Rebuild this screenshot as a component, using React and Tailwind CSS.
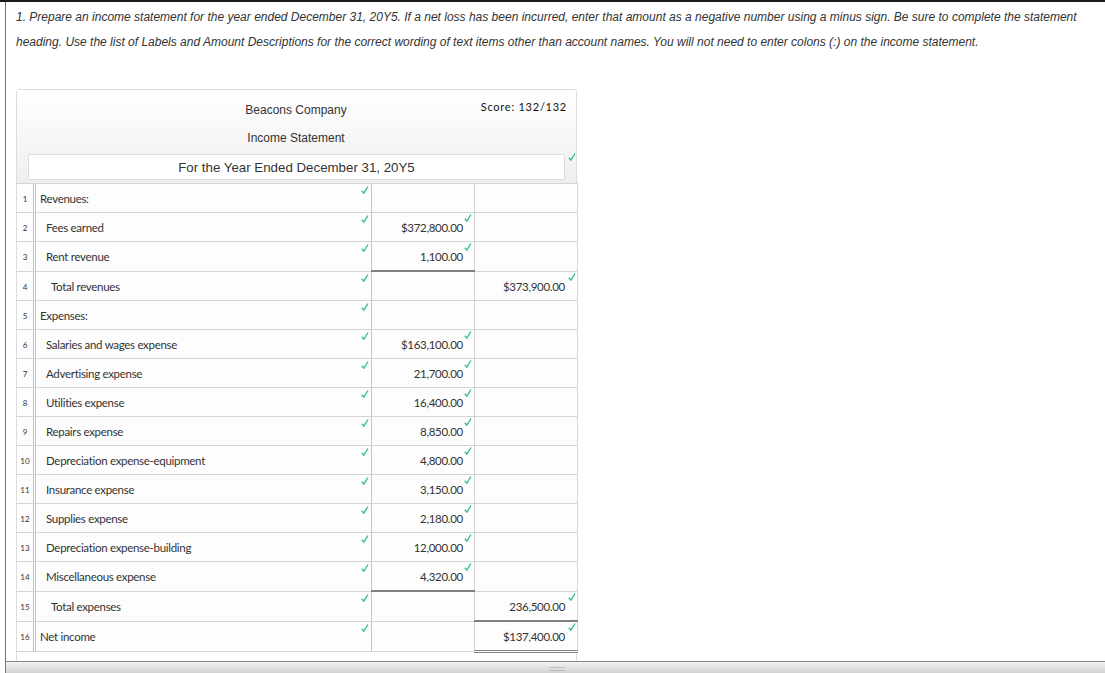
const rows = [
  { n: 1, label: "Revenues:", indent: 0, h: "h-[29px]" },
  { n: 2, label: "Fees earned", indent: 1, amount: "$372,800.00", h: "h-[29px]" },
  { n: 3, label: "Rent revenue", indent: 1, amount: "1,100.00", amountLine: true, h: "h-[30px]" },
  { n: 4, label: "Total revenues", indent: 2, total: "$373,900.00", h: "h-[29px]" },
  { n: 5, label: "Expenses:", indent: 0, h: "h-[29px]" },
  { n: 6, label: "Salaries and wages expense", indent: 1, amount: "$163,100.00", h: "h-[29px]" },
  { n: 7, label: "Advertising expense", indent: 1, amount: "21,700.00", h: "h-[29px]" },
  { n: 8, label: "Utilities expense", indent: 1, amount: "16,400.00", h: "h-[29px]" },
  { n: 9, label: "Repairs expense", indent: 1, amount: "8,850.00", h: "h-[29px]" },
  { n: 10, label: "Depreciation expense-equipment", indent: 1, amount: "4,800.00", h: "h-[29px]" },
  { n: 11, label: "Insurance expense", indent: 1, amount: "3,150.00", h: "h-[29px]" },
  { n: 12, label: "Supplies expense", indent: 1, amount: "2,180.00", h: "h-[29px]" },
  { n: 13, label: "Depreciation expense-building", indent: 1, amount: "12,000.00", h: "h-[29px]" },
  { n: 14, label: "Miscellaneous expense", indent: 1, amount: "4,320.00", amountLine: true, h: "h-[30px]" },
  { n: 15, label: "Total expenses", indent: 2, total: "236,500.00", totalLine: true, h: "h-[30px]" },
  { n: 16, label: "Net income", indent: 0, total: "$137,400.00", totalDouble: true, h: "h-[30px]" },
];

function Check({ className }) {
  return (
    <svg viewBox="0 0 8 8" className={"absolute w-[8px] h-[8px] " + className}>
      <path d="M0.8 4.8 L2.8 7.2 L7 0.5" fill="none" stroke="#3cc08a" strokeWidth="1.4" />
    </svg>
  );
}

function Row({ row }) {
  const indent = ["pl-[4px]", "pl-[10px]", "pl-[15px]"][row.indent];
  return (
    <div className={"flex border-b border-[#d4d4d4] " + row.h}>
      <div className="w-[16px] shrink-0 flex items-center justify-center text-[8px] text-[#333] pt-[1px]">{row.n}</div>
      <div className={"relative w-[339px] shrink-0 flex items-center border-l-[3px] border-double border-[#c4c4c4] border-r text-[11.5px] tracking-[-0.3px] text-[#333] pt-[1px] " + indent}>
        {row.label}
        <Check className="right-[2px] top-[2px]" />
      </div>
      <div className="relative w-[103px] shrink-0 flex items-center justify-end pr-[11px] border-r border-[#d4d4d4] text-[11.5px] tracking-[-0.3px] text-[#333] pt-[1px]">
        {row.amount}
        {row.amount && <Check className="right-[2px] top-[1px]" />}
        {row.amountLine && <div className="absolute -left-px -right-px -bottom-px h-[2px] bg-[#808080]" />}
      </div>
      <div className="relative w-[103px] shrink-0 flex items-center justify-end pr-[12px] border-r border-[#d4d4d4] text-[11.5px] tracking-[-0.3px] text-[#333] pt-[1px]">
        {row.total}
        {row.total && <Check className="right-[1px] top-[1px]" />}
        {row.totalLine && <div className="absolute -left-px -right-px -bottom-px h-[2px] bg-[#808080]" />}
        {row.totalDouble && <div className="absolute -left-px -right-px -bottom-[2px] h-[3px] border-y border-[#808080] bg-white" />}
      </div>
    </div>
  );
}

export default function App() {
  return (
    <div className="h-[673px] overflow-hidden bg-white flex flex-col font-['Lato',sans-serif]">
      <div className="h-[2px] bg-[#1a1a1a] shrink-0" />
      <div className="flex-1 flex flex-col ml-[5px] border-l border-[#777] min-h-0">
        <div className="flex-1 min-h-0 overflow-hidden pl-[10px]">
          <p className="pt-[3px] w-[1085px] text-[12px] leading-[25px] italic text-[#333] font-['Liberation_Sans',sans-serif]">
            1. Prepare an income statement for the year ended December 31, 20Y5. If a net loss has been incurred, enter that amount as a negative number using a minus sign. Be sure to complete the statement heading. Use the list of Labels and Amount Descriptions for the correct wording of text items other than account names. You will not need to enter colons (:) on the income statement.
          </p>

          {/* Statement */}
          <div className="mt-[34px] w-[561px] h-[600px] border border-[#dcdcdc] rounded-tr-[4px] rounded-tl-[4px] border-b-0">
            <div className="relative h-[93px] bg-gradient-to-b from-white to-[#efefef] font-['Liberation_Sans',sans-serif] text-[#333]">
              <div className="absolute right-[9px] top-[9px] text-[11px] tracking-[0.75px] font-['Lato',sans-serif] text-[#111]">Score: 132/132</div>
              <div className="w-[536px] ml-[11px] flex flex-col items-center">
                <div className="h-[36px] flex items-end text-[12px] pb-[7px]">Beacons Company</div>
                <div className="h-[28px] flex items-end text-[12px] pb-[7px]">Income Statement</div>
              </div>
              <div className="relative ml-[11px] w-[537px] h-[26px] bg-white border border-[#dcdcdc] rounded-[2px] flex items-center justify-center text-[13.3px] pt-[1px]">
                For the Year Ended December 31, 20Y5
                <Check className="-right-[12px] -top-[2px]" />
              </div>
            </div>
            <div className="w-[561px] border-t border-r border-[#d4d4d4] bg-[#fdfdfd]">
              {rows.map((row) => (
                <Row key={row.n} row={row} />
              ))}
            </div>
          </div>
        </div>
        {/* Bottom splitter bar */}
        <div className="relative h-[12px] shrink-0 border-t border-[#888] bg-gradient-to-b from-[#f2f2f2] to-[#d2d2d2]">
          <div className="absolute left-[543px] top-[5px] w-[16px] h-[4px] border-y border-[#bdbdbd]" />
        </div>
      </div>
    </div>
  );
}
